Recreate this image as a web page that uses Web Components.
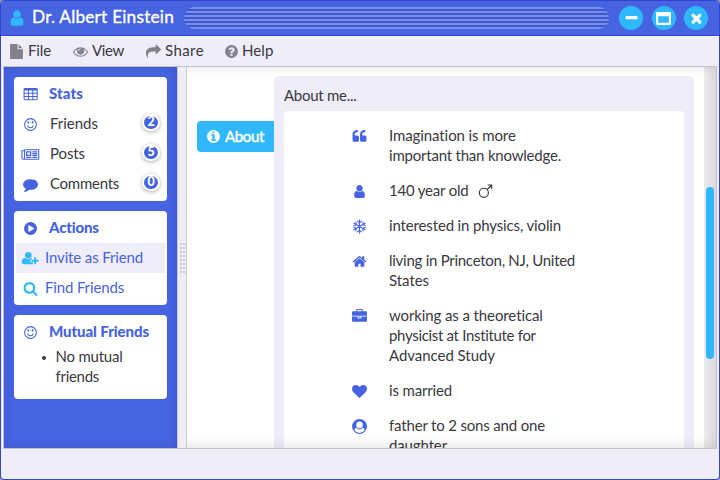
<!DOCTYPE html>
<html lang="en"><head><meta charset="utf-8"><title>Dr. Albert Einstein</title>
<style>
html,body{margin:0;height:100%;overflow:hidden;background:#99a}
body{font:15px/20px Lato,"Open Sans",sans-serif;color:#3a3841}
</style></head><body>
<app-window></app-window>
<script>
const ROUND='M1664 896q0 209-103 385.5t-279.5 279.5-385.5 103-385.5-103-279.5-279.5-103-385.5 103-385.5 279.5-279.5 385.5-103 385.5 103 279.5 279.5 103 385.5z';
const p=d=>`<path d="${d}"/>`;
const QUOTE='v384q0 80-56 136t-136 56h-384q-80 0-136-56t-56-136v-704q0-104 40.5-198.5t109.5-163.5 163.5-109.5 198.5-40.5h64q26 0 45 19t19 45v128q0 26-19 45t-45 19h-64q-106 0-181 75t-75 181v32q0 40 28 68t68 28h224q80 0 136 56t56 136z';
const ICONS={
user:p('M1536 1399q0 109-62.5 187t-150.5 78h-854q-88 0-150.5-78t-62.5-187q0-85 8.5-160.5t31.5-152 58.5-131 94-89 134.5-34.5q131 128 313 128t313-128q76 0 134.5 34.5t94 89 58.5 131 31.5 152 8.5 160.5zm-256-887q0 159-112.5 271.5t-271.5 112.5-271.5-112.5-112.5-271.5 112.5-271.5 271.5-112.5 271.5 112.5 112.5 271.5z'),
file:p('M1152 512v-472q22 14 36 28l408 408q14 14 28 36h-472zm-128 32q0 40 28 68t68 28h544v1056q0 40-28 68t-68 28h-1344q-40 0-68-28t-28-68v-1600q0-40 28-68t68-28h800v544z'),
eye:p('M1664 960q-152-236-381-353 61 104 61 225 0 185-131.5 316.5t-316.5 131.5-316.5-131.5-131.5-316.5q0-121 61-225-229 117-381 353 133 205 333.5 326.5t434.5 121.5 434.5-121.5 333.5-326.5zm-720-384q0-20-14-34t-34-14q-125 0-214.5 89.5t-89.5 214.5q0 20 14 34t34 14 34-14 14-34q0-86 61-147t147-61q20 0 34-14t14-34zm848 384q0 34-20 69-140 230-376.5 368.5t-499.5 138.5-499.5-139-376.5-368q-20-35-20-69t20-69q140-229 376.5-368t499.5-139 499.5 139 376.5 368q20 35 20 69z'),
share:p('M1792 640q0 26-19 45l-512 512q-19 19-45 19t-45-19-19-45v-256h-224q-98 0-175.5 6t-154 21.5-133 42.5-105.5 69.5-80 101-48.5 138.5-17.5 181q0 55 5 123 0 6 2.5 23.5t2.5 26.5q0 15-8.5 25t-23.5 10q-16 0-28-17-7-9-13-22t-13.5-30-10.5-24q-127-285-127-451 0-199 53-333 162-403 875-403h224v-256q0-26 19-45t45-19 45 19l512 512q19 19 19 45z'),
help:p('M1024 1376v-192q0-14-9-23t-23-9h-192q-14 0-23 9t-9 23v192q0 14 9 23t23 9h192q14 0 23-9t9-23zm256-672q0-88-55.5-163t-138.5-116-170-41q-243 0-371 213-15 24 8 42l132 100q7 6 19 6 16 0 25-12 53-68 86-92 34-24 86-24 48 0 85.5 26t37.5 59q0 38-20 61t-68 45q-63 28-115.5 86.5t-52.5 125.5v36q0 14 9 23t23 9h192q14 0 23-9t9-23q0-19 21.5-49.5t54.5-49.5q32-18 49-28.5t46-35 44.5-48 28-60.5 12.5-81z'+ROUND),
info:p('M1152 1376v-160q0-14-9-23t-23-9h-96v-512q0-14-9-23t-23-9h-320q-14 0-23 9t-9 23v160q0 14 9 23t23 9h96v320h-96q-14 0-23 9t-9 23v160q0 14 9 23t23 9h448q14 0 23-9t9-23zm-128-896v-160q0-14-9-23t-23-9h-192q-14 0-23 9t-9 23v160q0 14 9 23t23 9h192q14 0 23-9t9-23z'+ROUND),
comment:p('M1792 896q0 174-120 321.5t-326 233-450 85.5q-70 0-145-8-198 175-460 242-49 14-114 22-17 2-30.5-9t-17.5-29v-1q-3-4-.5-12t2-10 4.5-9.5l6-9 7-8.5 8-9q7-8 31-34.5t34.5-38 31-39.5 32.5-51 27-59 26-76q-157-89-247.5-220t-90.5-281q0-130 71-248.5t191-204.5 286-136.5 348-50.5q244 0 450 85.5t326 233 120 321.5z'),
play:p(ROUND+'M1280 951q32-18 32-55t-32-55l-544-320q-31-19-64-1-32 19-32 56v640q0 37 32 56 16 8 32 8 17 0 32-9z'),
search:p('M1216 832q0-185-131.5-316.5t-316.5-131.5-316.5 131.5-131.5 316.5 131.5 316.5 316.5 131.5 316.5-131.5 131.5-316.5zm512 832q0 52-38 90t-90 38q-54 0-90-38l-343-342q-179 124-399 124-143 0-273.5-55.5t-225-150-150-225-55.5-273.5 55.5-273.5 150-225 225-150 273.5-55.5 273.5 55.5 225 150 150 225 55.5 273.5q0 220-124 399l343 343q37 37 37 90z'),
quote:p('M832 960'+QUOTE+'M1728 960'+QUOTE),
home:p('M1472 992v480q0 26-19 45t-45 19h-384v-384h-256v384h-384q-26 0-45-19t-19-45v-480q0-1 .5-3t.5-3l575-474 575 474q1 2 1 6zm223-69l-62 74q-8 9-21 11h-3q-13 0-21-7l-692-577-692 577q-12 8-24 7-13-2-21-11l-62-74q-8-10-7-23.5t11-21.5l719-599q32-26 76-26t76 26l244 204v-195q0-14 9-23t23-9h192q14 0 23 9t9 23v408l219 182q10 8 11 21.5t-7 23.5z'),
work:p('M640 256h512v-128h-512v128zm1152 640v480q0 66-47 113t-113 47h-1472q-66 0-113-47t-47-113v-480h672v160q0 26 19 45t45 19h320q26 0 45-19t19-45v-160h672zm-768 0v128h-256v-128h256zm768-480v384h-1792v-384q0-66 47-113t113-47h352v-160q0-40 28-68t68-28h576q40 0 68 28t28 68v160h352q66 0 113 47t47 113z'),
heart:p('M896 1664q-26 0-44-18l-624-602q-10-8-27.5-26t-55.5-65.5-68-97.5-53.5-121-23.5-138q0-220 127-344t351-124q62 0 126.5 21.5t120 58 95.5 68.5 76 68q36-36 76-68t95.5-68.5 120-58 126.5-21.5q224 0 351 124t127 344q0 221-229 450l-623 600q-18 18-44 18z'),
table:'<path fill-rule="evenodd" d="M224 130h1376q160 0 160 160v1120q0 160-160 160H224q-160 0-160-160V290q0-160 160-160zM190 430v260h400V430zM710 430v260h400V430zM1230 430v260h400V430zM190 810v260h400V810zM710 810v260h400V810zM1230 810v260h400V810zM190 1190v260h400v-260zM710 1190v260h400v-260zM1230 1190v260h400v-260z"/>',
smile:'<g fill="none" stroke="currentColor" stroke-width="128"><circle cx="896" cy="896" r="704"/><path d="M570 1060Q650 1290 896 1290T1222 1060" stroke-linecap="round"/></g><circle cx="640" cy="640" r="128"/><circle cx="1152" cy="640" r="128"/>',
news:'<g fill="none" stroke="currentColor" stroke-width="128"><path d="M180 320H1880V1472H60Q-130 1472-130 1280V448H170M180 320V1280Q180 1400 60 1472"/><path stroke-width="150" d="M430 590H920V1000H430ZM360 1230H1000M1120 590H1700M1120 800H1700M1120 1010H1700M1120 1230H1700"/></g>',
adduser:'<circle cx="640" cy="500" r="390"/><path d="M290 840q150 140 350 140t330-130q70 0 100 40v150H890v310h310v190q-50 30-110 30H150q-300 0-300-270 0-460 440-460z"/><path d="M1350 740h220v310h290v220h-290v310h-220v-310h-310v-220h310z"/>',
snow:'<g fill="none" stroke="currentColor" stroke-width="130" stroke-linecap="round" stroke-linejoin="round">'+[0,60,120,180,240,300].map(a=>`<path transform="rotate(${a} 896 896)" d="M896 896V110M650 250L896 450 1142 250"/>`).join('')+'</g>',
person:'<circle cx="896" cy="896" r="890"/><path fill="#fff" d="M530 1010q150 210 366 210t366-210q210 60 260 320-210 330-626 330t-626-330q50-260 260-320z"/><ellipse cx="896" cy="720" rx="390" ry="430" fill="#fff"/><path fill="none" stroke="currentColor" stroke-width="110" d="M540 980q140 200 356 200t356-200"/>',
male:'<g fill="none" stroke="currentColor" stroke-width="140"><circle cx="700" cy="1050" r="540"/><path d="M1090 660L1600 150M1160 120H1630V590"/></g>',
min:'<rect x="180" y="590" width="1432" height="400" rx="100"/>',
max:'<path fill-rule="evenodd" d="M160 128h1472q160 0 160 160v1216q0 160-160 160H160q-160 0-160-160V288q0-160 160-160zM256 640v768h1280V640z"/>',
close:'<path fill="none" stroke="currentColor" stroke-width="390" stroke-linecap="round" d="M500 520L1292 1312M1292 520L500 1312"/>'
};
const define=(name,make)=>customElements.define(name,class extends HTMLElement{
 connectedCallback(){if(!this.shadowRoot)this.attachShadow({mode:'open'}).innerHTML=make(this)}
});
define('ui-icon',e=>{const s=e.getAttribute('size')||15;return `<style>:host{display:inline-block;flex:none;width:${s}px;height:${s}px}svg{display:block;overflow:visible;width:100%;height:100%;fill:currentColor}</style><svg viewBox="0 0 1792 1792">${ICONS[e.getAttribute('name')]}</svg>`});
/* A single line of text, tracked so that it takes the advance width given in "w". */
customElements.define('fit-text',class extends HTMLElement{
 connectedCallback(){
  this.attachShadow({mode:'open'}).innerHTML='<style>:host{display:flow-root;white-space:nowrap;height:20px}span{display:block;width:max-content;margin-top:-1px}</style><span><slot></slot></span>';
  const s=this.shadowRoot.querySelector('span'),n=this.textContent.length,w=+this.getAttribute('w');
  s.style.letterSpacing=((w-s.getBoundingClientRect().width)/n)+'px';
 }
});
define('title-bar',()=>`<style>:host{display:flex;align-items:center;height:34px;padding:0 11px 0 7px;background:#4663e2;border-bottom:1px solid #3444cc;color:#fff}
ui-icon{color:#2fb8fd}fit-text{margin-left:6px;font-size:17.3px;-webkit-text-stroke:.35px #fff;width:152px}
.grip{flex:1;height:22px;border-radius:11px;background:repeating-linear-gradient(#7890ec 0 2px,#3f58cc 2px 4px);margin-right:10px}
.b{display:flex;gap:8.5px}.b span{width:24px;height:24px;border-radius:50%;background:#2fb8fd;display:flex;align-items:center;justify-content:center}.b ui-icon{color:#fff}</style>
<ui-icon name="user" size="18"></ui-icon><fit-text w="142">Dr. Albert Einstein</fit-text><div class="grip"></div><div class="b"><span><ui-icon name="min"></ui-icon></span><span><ui-icon name="max"></ui-icon></span><span><ui-icon name="close"></ui-icon></span></div>`);
define('menu-bar',()=>`<style>:host{display:flex;height:30px;padding-left:8px}div{display:flex;align-items:center}ui-icon{color:#84808f;margin-right:4px}</style>
<div style="width:64px"><ui-icon name="file"></ui-icon><fit-text w="23">File</fit-text></div><div style="width:73px"><ui-icon name="eye"></ui-icon><fit-text w="32">View</fit-text></div><div style="width:78px"><ui-icon name="share"></ui-icon><fit-text w="39">Share</fit-text></div><div><ui-icon name="help"></ui-icon><fit-text w="31.5" style="margin-left:-1px">Help</fit-text></div>`);
define('side-card',()=>`<style>:host{display:block;background:#fff;border-radius:4px;padding:2px}</style><slot></slot>`);
define('side-row',e=>{const k=e.getAttribute('kind'),n=e.getAttribute('count');return `<style>:host{display:flex;align-items:center;height:30px;padding:0 5px 0 7px;${k=='head'?'color:#4663e2;font-weight:900;':k=='link'?'color:#4663e2;':''}${e.hasAttribute('active')?'background:#efedf7;':''}}
ui-icon{color:${k=='link'?'#2fb8fd':'#4663e2'};margin-right:${k=='head'?11:k=='link'?7:12}px}
b{margin-left:auto;margin-top:-4px;width:14px;height:13px;border:2px solid #fff;border-radius:9px;background:#4663e2;color:#fff;font:900 12.5px/12.5px Lato,sans-serif;text-align:center;box-shadow:0 1px 4px #0005}</style><ui-icon name="${e.getAttribute('icon')}"></ui-icon><slot></slot>${n?`<b>${n}</b>`:''}`});
define('side-bar',()=>`<style>:host{display:flex;flex-direction:column;gap:10px;width:153px;flex:none;padding:10px 10px 0;background:#4663e2;border-right:1px solid #c9c7d2;box-shadow:inset 0 0 10px #0002}
ul{margin:0;padding:0 0 10px 39.5px;list-style:none}li{display:flex}li i{width:4px;height:4px;border-radius:50%;background:#3a3841;margin:9px 10px 0 -14px}</style>
<side-card><side-row kind="head" icon="table"><fit-text w="34">Stats</fit-text></side-row><side-row icon="smile" count="2"><fit-text w="48">Friends</fit-text></side-row><side-row icon="news" count="5"><fit-text w="35">Posts</fit-text></side-row><side-row icon="comment" count="0"><fit-text w="69">Comments</fit-text></side-row></side-card>
<side-card><side-row kind="head" icon="play"><fit-text w="50">Actions</fit-text></side-row><side-row kind="link" icon="adduser" active><fit-text w="98">Invite as Friend</fit-text></side-row><side-row kind="link" icon="search"><fit-text w="79">Find Friends</fit-text></side-row></side-card>
<side-card><side-row kind="head" icon="smile"><fit-text w="100">Mutual Friends</fit-text></side-row><ul><li><i></i><div><fit-text w="67">No mutual</fit-text><fit-text w="43.5">friends</fit-text></div></li></ul></side-card>`);
define('split-bar',()=>`<style>:host{display:flex;align-items:center;justify-content:center;width:8px;flex:none;border-right:1px solid #c9c7d2}i{width:5px;height:30px;background:repeating-linear-gradient(transparent 0 2px,#efedf7 2px 4px),repeating-linear-gradient(90deg,#c9c7d2 0 2px,#efedf7 2px 3px)}</style><i></i>`);
define('fact-row',e=>`<style>:host{display:flex;margin-bottom:15px}ui-icon{color:#4663e2;margin:2.5px 22.5px 0 0}</style><ui-icon name="${e.getAttribute('icon')}"></ui-icon><div><slot></slot></div>`);
define('about-page',()=>`<style>:host{display:flex;flex:1;padding:9px 10px 0;height:372px;align-items:flex-start;overflow:hidden}
.tab{display:flex;align-items:center;width:68px;height:31px;margin-top:45px;padding-left:9px;gap:4px;background:#2fb8fd;color:#fff;border-radius:4px 0 0 4px}.tab fit-text{-webkit-text-stroke:.45px #fff}
.panel{flex:1;background:#efedf7;border-radius:5px 5px 0 0;padding:10px 10px 0;height:480px}
.facts{margin-top:5px;height:430px;background:#fff;border-radius:4px;padding:15px 0 0 67.5px}.age{display:flex;gap:9px}.age ui-icon{margin-top:2.5px}</style>
<div class="tab"><ui-icon name="info"></ui-icon><fit-text w="39">About</fit-text></div>
<div class="panel"><fit-text w="72.5">About me...</fit-text><div class="facts">
<fact-row icon="quote"><fit-text w="127">Imagination is more</fit-text><fit-text w="172">important than knowledge.</fit-text></fact-row>
<fact-row icon="user"><div class="age"><fit-text w="79.5">140 year old</fit-text><ui-icon name="male"></ui-icon></div></fact-row>
<fact-row icon="snow"><fit-text w="172">interested in physics, violin</fit-text></fact-row>
<fact-row icon="home"><fit-text w="186">living in Princeton, NJ, United</fit-text><fit-text w="40">States</fit-text></fact-row>
<fact-row icon="work"><fit-text w="154">working as a theoretical</fit-text><fit-text w="147">physicist at Institute for</fit-text><fit-text w="106">Advanced Study</fit-text></fact-row>
<fact-row icon="heart"><fit-text w="63">is married</fit-text></fact-row>
<fact-row icon="person"><fit-text w="156">father to 2 sons and one</fit-text><fit-text w="58">daughter</fit-text></fact-row>
</div></div>`);
define('scroll-bar',()=>`<style>:host{display:block;width:12px;height:381px;background:linear-gradient(90deg,#ececee,#d9d9dc);flex:none}i{display:block;width:8px;height:172px;margin:120px auto 0;background:#2fb8fd;border-radius:4px}</style><i></i>`);
define('app-window',()=>`<style>:host{display:flex;flex-direction:column;box-sizing:border-box;width:720px;height:480px;border:1px solid #3444cc;border-radius:4px;background:#efedf7;overflow:hidden}
main{display:flex;height:381px;margin:0 2px;border:1px solid #c3c1ca;overflow:hidden;background:#efedf7}
.view{display:flex;flex:1;position:relative;background:#fff;overflow:hidden}
.view::after{content:"";position:absolute;inset:0;pointer-events:none;background:linear-gradient(#0000000e,transparent 8px,transparent calc(100% - 11px),#00000012)}</style>
<title-bar></title-bar><menu-bar></menu-bar><main><side-bar></side-bar><split-bar></split-bar><div class="view"><about-page></about-page><scroll-bar></scroll-bar></div></main>`);
</script></body></html>
